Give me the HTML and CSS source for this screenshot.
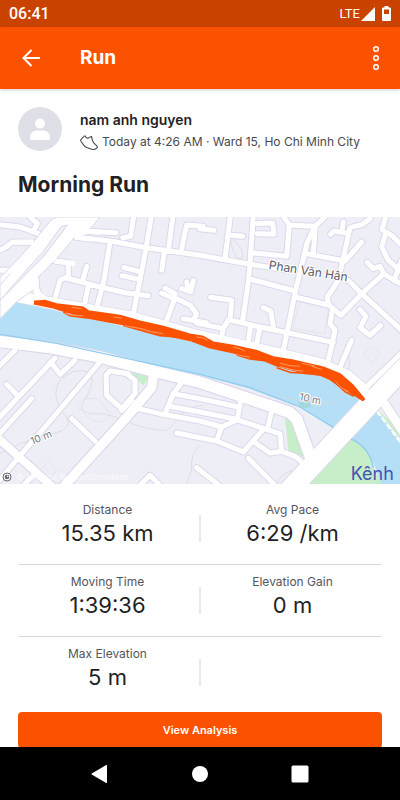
FILE: index.html
```html
<!DOCTYPE html>
<html lang="en">
<head>
    <meta charset="UTF-8">
    <meta name="viewport" content="width=device-width, initial-scale=1.0">
    <title>Morning Run</title>
    <link rel="stylesheet" href="styles.css">
</head>
<body>
    <div class="status-bar">
        <span class="clock">06:41</span>
        <div class="status-icons">
            <span class="network">LTE</span>
            <svg width="14" height="14" viewBox="0 0 14 14"><path d="M14 0v14H0z" fill="#fff"/></svg>
            <svg class="battery" width="9" height="15" viewBox="0 0 9 15"><path d="M2.500 0h4v1.500H8a1 1 0 0 1 1 1V14a1 1 0 0 1-1 1H1a1 1 0 0 1-1-1V2.500a1 1 0 0 1 1-1h1.500z" fill="#fff"/><path d="M2 3.500h5V8H2z" fill="#ca4200"/></svg>
        </div>
    </div>

    <header class="toolbar">
        <button class="icon-btn" aria-label="Back">
            <svg width="18" height="18" viewBox="0 0 18 18" fill="none" stroke="#fff" stroke-width="2"><path d="M9.500 1L1.500 9l8 8M1.500 9H18"/></svg>
        </button>
        <h1>Run</h1>
        <button class="icon-btn more" aria-label="More options">
            <svg width="8" height="26" viewBox="0 0 8 26" fill="none" stroke="#fff" stroke-width="1.500"><circle cx="4" cy="4" r="2.300"/><circle cx="4" cy="13" r="2.300"/><circle cx="4" cy="22" r="2.300"/></svg>
        </button>
    </header>

    <main>
        <section class="athlete">
            <svg class="avatar" width="44" height="44" viewBox="0 0 44 44">
                <circle cx="22" cy="22" r="22" fill="#dfdfe8"/>
                <circle cx="22" cy="16.500" r="5" fill="#fff"/>
                <path d="M12 31c0-4.500 3-7.500 7-7.500h6c4 0 7 3 7 7.500 0 1.300-.7 2-2 2H14c-1.300 0-2-.7-2-2z" fill="#fff"/>
            </svg>
            <div>
                <p class="name">nam anh nguyen</p>
                <p class="meta">
                    <svg width="18" height="15" viewBox="0 0 18 15" fill="none" stroke="#494950" stroke-width="1.100" stroke-linejoin="round" stroke-linecap="round"><path d="M4.300 1L1 4.700c-.4.500-.4 1.200 0 1.800l3.300 4.300c.6.800 1.400 1.300 2.300 1.600l5.200 1.900c1.200.4 2.500.3 3.500-.3l1.500-1c.6-.4.700-1.100.3-1.700l-1.600-1.700c-1.600-1.300-2.600-2.400-3.100-4.300L11.600 1.400l-1.700.8c-1 .9-2.300 1.200-3.400.6C5.700 2.400 5.300 1.800 5.300 1z"/></svg>
                    <span>Today at 4:26 AM · Ward 15, Ho Chi Minh City</span>
                </p>
            </div>
        </section>
        <h2>Morning Run</h2>

        <svg class="map" viewBox="0 0 1200 801" preserveAspectRatio="xMidYMid slice" role="img" aria-label="Route map">
            <defs>
                <g id="streets">
                    <path d="M-10 22L60 30 130 55M90 0L112 20 98 45M-10 102L12 94 38 75 100 76M-10 160H60"/>
                    <path d="M225 60L330 72 440 92 600 115 750 142 860 158M265 43L348 47M402 -10L392 58 368 62M455 -10L438 95 400 290M520 -10L505 100M610 28L560 24 545 95M493 105L485 160"/>
                    <path d="M330 75L312 190 292 265M165 132L205 137V178L180 190 165 245M200 183L300 210 380 228 445 236M260 148L248 190M265 205L255 255M372 152L425 165M366 176L420 188"/>
                    <path d="M485 228L515 242M495 213L525 230 522 250 500 310M525 243L570 265 590 290 580 310M545 215L572 225 580 190M560 195L563 215M550 305L620 318"/>
                    <path d="M600 35L642 40M692 -10L675 125M685 54L728 58M760 -10L750 140 745 195 728 310M770 20L818 18 822 52 772 50M760 108L860 118 868 24 940 28M852 0L868 24"/>
                    <path d="M975 0L945 28 922 75 888 215 850 400M946 28L940 110M918 110L1035 132 1085 75M1110 5L1088 22 1050 32 1022 160M992 52L1002 42 1040 48M1030 15L1026 45"/>
                    <path d="M1160 -10L1146 38 1175 55 1200 80M1155 55L1145 90 1165 130 1200 160M1102 136L1120 155 1140 148 1152 170 1085 230 1023 295 985 262 982 240 1015 190M1045 190L1085 230 1210 345M1150 170L1210 205M1205 130L1182 190"/>
                    <path d="M750 186L885 222M885 240L985 264M632 241L695 250 690 310M590 318L670 335 685 308 780 330 1000 376M752 325L743 385M780 330L768 390M670 332L665 362M790 272L812 282 820 330M998 275L990 320 1005 340 998 372 985 430M1080 278L1098 298 1080 332 1110 355 1142 325M1055 370L1018 455"/>
                    <path d="M45 400L0 445M165 424L55 540-10 610M20 502L55 538M152 435L180 472 225 430M95 545L-10 660M300 435L150 612 55 722-10 800M75 800L110 765M215 605L285 672M385 470L330 462 318 475 320 535 365 575 405 530V490L380 470M365 580L395 550"/>
                    <path d="M415 575L480 590 600 612 665 630 712 608M550 490L520 530 495 590M520 530L610 547 715 570M508 568L600 585 700 605 840 650 845 703M725 535L712 608M665 630L650 672M530 648L650 672 730 705 790 637M815 580L803 635M762 675L810 708 845 703 885 718 918 745M745 724L830 810M590 752L670 815M415 810L450 775 485 810"/>
                </g>
                <g id="avenues">
                    <path d="M105 150L108 215 120 240" stroke-width="18"/>
                    <path d="M60 240L120 252 400 302 600 358 800 402 960 440 1040 475 1100 525" stroke-width="34"/>
                    <path d="M-10 372L150 392 300 420 450 460 600 496 868 586 890 605 940 745" stroke-width="34"/>
                    <path d="M462 465L455 512 385 595 185 815" stroke-width="28"/>
                    <path d="M-10 660L160 812" stroke-width="24"/>
                    <path d="M1150 555L1210 645" stroke-width="26"/>
                </g>
            </defs>

            <rect width="1200" height="801" fill="#eeeef6"/>
            <g class="contours">
                <path d="M-10 715L60 680 190 640Q220 620 190 590 150 530 180 490 220 450 265 465 290 480 260 540 220 590 290 590C360 590 400 640 500 640 530 620 540 570 610 565"/>
                <path d="M600 685Q570 710 575 760L560 801M830 801Q850 760 890 760M690 60Q740 100 725 125 700 130 690 60"/>
                <path class="faint" d="M230 565L250 545 290 545 333 590 310 615 275 610zM110 770L145 735 170 760 155 780M890 285L900 255 985 270 975 350 880 335zM1090 410L1120 390 1140 410 1115 440z"/>
            </g>

            <!-- water and parks -->
            <path d="M0 305L50 254 600 380 800 415 1000 460 1090 530 1130 579 1200 675V801H1140Q1120 700 1050 664L1005 634 900 570 750 515 600 474 170 384 0 354z" fill="#b4dff6"/>
            <path d="M890 810L1050 664Q1110 690 1120 754L1145 801z" fill="#c6eec8"/>
            <path d="M370 456L450 474 430 506 400 475zM855 600L880 600 910 720 865 702zM1130 575L1200 640V665z" fill="#c6eec8"/>
            <path d="M895 555L930 552 932 572H900z" fill="#a5d8da"/>
            <path d="M1130 582L1205 680" stroke="#fff" stroke-width="7" stroke-dasharray="18 7"/>
            <path class="contour" d="M1035 384Q1060 440 1040 470 1030 560 990 562L850 542Q780 540 785 510 795 470 840 450"/>

            <use href="#streets" class="casing-thin"/>
            <g class="casing-wide">
                <path d="M105 150L108 215 120 240" stroke-width="24"/>
                <path d="M60 240L120 252 400 302 600 358 800 402 960 440 1040 475 1100 525" stroke-width="38"/>
                <path d="M-10 372L150 392 300 420 450 460 600 496 868 586 890 605 940 745" stroke-width="41"/>
                <path d="M462 465L455 512 385 595 185 815" stroke-width="35"/>
                <path d="M-10 660L160 812" stroke-width="31"/>
                <path d="M1150 555L1210 645" stroke-width="32"/>
                <path d="M1225 436L865 823" stroke-width="66"/>
            </g>
            <use href="#avenues" class="road-wide"/>
            <use href="#streets" class="road-thin"/>
            <path d="M0 352L170 379 600 472 750 512 900 570 1005 634M1050 664Q1110 690 1120 754" fill="none" stroke="#8fcdf0" stroke-width="4"/>
            <path d="M1225 436L865 823" stroke="#fff" stroke-width="60"/>
            <path d="M1205 410L1100 510" stroke="#fff" stroke-width="14"/>
            <path d="M1205 418L1105 520M1200 400L1100 495" stroke="#dcd8ec" stroke-width="3"/>

            <!-- expressway -->
            <path d="M152 10L170 0H300L255 55 225 60 165 130 110 185 105 215 50 254 0 305V182L60 120 100 75z" fill="#fff" stroke="#dcd8ec" stroke-width="3"/>
            <path d="M100 75L60 76M165 132L225 140M225 60L270 66M105 160L108 225 140 248M255 43L300 46" stroke="#fff" stroke-width="15" fill="none"/>
            <path d="M203 24L183 29 130 103 105 130 0 250 128 122z" fill="#eeeef6" stroke="#dcd8ec" stroke-width="3"/>
            <path d="M0 205L30 170" stroke="#dcd8ec" stroke-width="3"/>

            <!-- recorded laps -->
            <path class="route" d="M104 253L135 251 170 261 250 271 265 282 360 296 420 313 490 329 570 352 610 359 640 376 700 386 770 401 820 420 880 430 970 451 1020 471 1060 506 1093 546 1088 550 1060 532 1020 508 990 487 960 474 890 462 830 446 790 430 750 423 700 407 630 392 570 370 480 351 390 326 340 317 260 302 210 288 160 272 104 261z"/>
            <path class="route-lap" d="M190 285L210 296 260 303M370 325L440 345 480 356 530 360M710 414L750 426 790 430M830 452L870 466 900 468 960 474M1000 492L1035 524 1062 538"/>
            <path class="route-gaps" d="M195 288L215 294 250 297M215 271L245 275M340 300L365 303M375 326L425 335 455 344 490 350M590 360L610 363 625 371M700 390L720 395 735 403M700 411L750 421M840 439L870 446 900 448M840 449L880 459 910 462M905 439L945 447M935 448L965 457M1005 491L1025 513 1045 524"/>

            <g class="map-labels">
                <text x="805" y="156" transform="rotate(9 805 156)" font-size="36">Phan Văn Hân</text>
                <text class="height" x="97" y="683" transform="rotate(-22 97 683)" font-size="30">10 m</text>
                <text class="height" x="896" y="549" transform="rotate(12 896 549)" font-size="30">10 m</text>
                <text class="canal" x="1052" y="788" font-size="54">Kênh</text>
                <text class="credit" x="50" y="789" font-size="24">© Mapbox © OpenStreetMap</text>
            </g>
            <circle cx="21" cy="780" r="12" fill="#fff" stroke="#66666b" stroke-width="3"/>
            <circle cx="21" cy="780" r="7" fill="#66666b"/>
            <path d="M23 774l1 3 3 1-3 1-1 3-1-3-3-1 3-1z" fill="#fff"/>
        </svg>

        <div class="stats">
            <div class="row">
                <dl><dt>Distance</dt><dd>15.35 km</dd></dl>
                <span class="divider"></span>
                <dl><dt>Avg Pace</dt><dd>6:29 /km</dd></dl>
            </div>
            <div class="row">
                <dl><dt>Moving Time</dt><dd>1:39:36</dd></dl>
                <span class="divider"></span>
                <dl><dt>Elevation Gain</dt><dd>0 m</dd></dl>
            </div>
            <div class="row">
                <dl><dt>Max Elevation</dt><dd>5 m</dd></dl>
                <span class="divider"></span>
            </div>
        </div>

        <div class="actions">
            <button class="btn">View Analysis</button>
        </div>
    </main>

    <nav class="nav-bar">
        <button aria-label="Back"><svg width="18" height="18" viewBox="0 0 18 18"><path d="M16 0.500v17q0 .8-.8.400L.8 9.500q-.6-.5 0-1L15.200.100q.8-.4.8.400z" fill="#fff"/></svg></button>
        <button aria-label="Home"><svg width="18" height="18" viewBox="0 0 18 18"><circle cx="9" cy="9" r="8" fill="#fff"/></svg></button>
        <button aria-label="Recent apps"><svg width="18" height="18" viewBox="0 0 18 18"><rect x="0.500" y="0.500" width="17" height="17" rx="1.500" fill="#fff"/></svg></button>
    </nav>
</body>
</html>
```

FILE: styles.css
```css
* {
    box-sizing: border-box;
}

body {
    margin: 0;
    height: 100vh;
    display: flex;
    flex-direction: column;
    background: #fff;
    color: #1f1f24;
    font-family: Inter, sans-serif;
}

h1, h2, p, dl, dd {
    margin: 0;
}

button {
    border: none;
    padding: 0;
    background: none;
    font-family: inherit;
    cursor: pointer;
}

svg {
    display: block;
}

.status-bar {
    flex: none;
    height: 27px;
    padding: 0 9px;
    display: flex;
    align-items: center;
    justify-content: space-between;
    background: #ca4200;
    color: #fff;
    font-family: Roboto, sans-serif;
}

.clock {
    font-size: 16px;
    font-weight: 500;
}

.status-icons {
    display: flex;
    align-items: center;
    gap: 1px;
}

.network {
    font-size: 13px;
}

.battery {
    margin-left: 6px;
}

.toolbar {
    flex: none;
    height: 62px;
    padding: 0 18px 0 22px;
    display: flex;
    align-items: center;
    background: #fc5200;
    color: #fff;
    box-shadow: 0 1px 3px rgba(0, 0, 0, 0.2);
    z-index: 1;
}

.toolbar h1 {
    flex: 1;
    margin-left: 40px;
    font-size: 19px;
    line-height: 24px;
}

.more {
    padding: 0 2px;
}

main {
    flex: 1;
    min-height: 0;
    overflow-y: auto;
    scrollbar-width: none;
}

.athlete {
    display: flex;
    align-items: flex-start;
    gap: 18px;
    padding: 18px 18px 0;
}

.name {
    padding-top: 2px;
    font-size: 14px;
    font-weight: 600;
    line-height: 22px;
}

.meta {
    display: flex;
    align-items: center;
    gap: 4px;
    color: #494950;
    font-size: 12px;
    line-height: 22px;
}

h2 {
    padding: 18px 18px;
    font-size: 21px;
    line-height: 28px;
}

.map {
    width: 100%;
    height: 267px;
}

.contours path, .contour {
    fill: none;
    stroke: #d5d5da;
    stroke-width: 3;
    opacity: 0.7;
}

.contours .faint {
    opacity: 0.4;
}

.casing-thin, .road-thin, .casing-wide, .road-wide {
    fill: none;
    stroke-linecap: round;
    stroke-linejoin: round;
}

.casing-thin {
    stroke: #dcd8ec;
    stroke-width: 21;
}

.road-thin {
    stroke: #fff;
    stroke-width: 15;
}

.casing-wide {
    stroke: #dcd8ec;
}

.road-wide {
    stroke: #fff;
}

.route {
    fill: #fc5200;
    stroke: #fc5200;
    stroke-width: 5;
    stroke-linejoin: round;
}

.route-lap {
    fill: none;
    stroke: #fc5200;
    stroke-width: 5;
    stroke-linejoin: round;
}

.route-gaps {
    fill: none;
    stroke: #ffb591;
    stroke-width: 2;
}

.map-labels text {
    fill: #5b5b63;
    stroke: #fff;
    stroke-width: 6;
    paint-order: stroke;
}

.map-labels .height {
    fill: #77777c;
}

.map-labels .canal {
    fill: #4453b0;
    stroke: none;
}

.map-labels .credit {
    fill: #fff;
    stroke: none;
    opacity: 0.7;
}

.stats {
    padding: 9px 18px 0;
}

.row {
    display: grid;
    grid-template-columns: 1fr 2px 1fr;
    gap: 2px;
    height: 72px;
    padding-top: 9px;
    border-bottom: 1px solid #d6d6dd;
    text-align: center;
}

.row:last-child {
    border-bottom: none;
}

.row dt {
    color: #55555c;
    font-size: 12px;
    line-height: 16px;
}

.row dd {
    font-size: 22px;
    line-height: 30px;
}

.divider {
    height: 27px;
    margin-top: 13px;
    background: #e9e9ec;
}

.actions {
    padding: 3px 18px 0;
}

.btn {
    width: 100%;
    height: 36px;
    border-radius: 4px;
    background: #fc5200;
    color: #fff;
    font-size: 11px;
    font-weight: 600;
}

.nav-bar {
    flex: none;
    height: 53px;
    padding: 0 50px;
    display: flex;
    align-items: center;
    background: #000;
}

.nav-bar button {
    flex: 1;
    display: flex;
    justify-content: center;
}
```
